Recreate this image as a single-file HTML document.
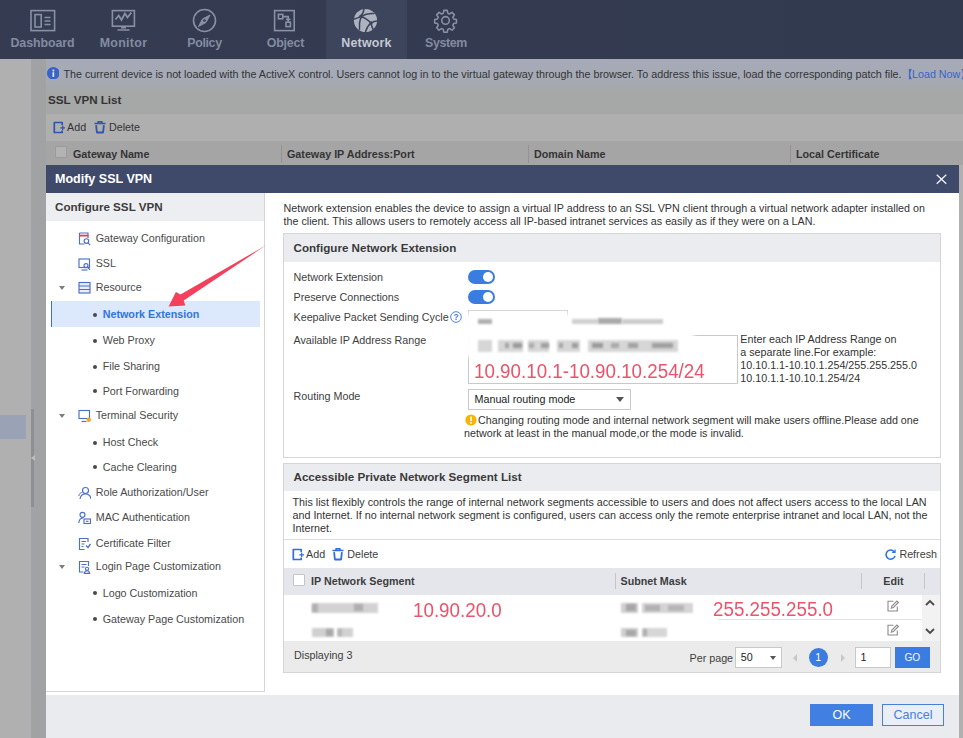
<!DOCTYPE html>
<html>
<head>
<meta charset="utf-8">
<title>Modify SSL VPN</title>
<style>
*{box-sizing:border-box;margin:0;padding:0}
html,body{width:963px;height:738px;overflow:hidden}
body{font-family:"Liberation Sans",sans-serif;font-size:10.74px;color:#3e3e3e;background:#a9a9a9;position:relative}
.abs{position:absolute}
.t{position:absolute;white-space:nowrap;line-height:14px}
.b{font-weight:bold}
#nav{left:0;top:0;width:963px;height:58.5px;background:linear-gradient(90deg,#353c52 0,#343b50 50%,#313a4e 100%)}
#nav .tab{position:absolute;top:0;height:58.5px;width:81px}
#nav .tab.on{background:#3d455d}
#nav .lbl{position:absolute;left:-20px;right:-20px;top:36px;text-align:center;font-weight:bold;font-size:12.4px;line-height:15px;color:#838ba1}
#nav .tab.on .lbl{color:#c6c9d3}
#nav svg{position:absolute;left:28px;top:8px;width:25px;height:25px;overflow:visible}
#side{left:0;top:58.5px;width:31px;height:680px;background:#b0b0b0}
#gap{left:31px;top:58.5px;width:15px;height:680px;background:#a1a2a4}
#page{left:46px;top:58.5px;width:917px;height:680px;background:#a6a7a7}
#info{left:46px;top:58.5px;width:917px;height:33px;background:linear-gradient(#a5aab6 0,#a5aab6 55%,#a6a7a8 100%)}
#tb{left:46px;top:114px;width:917px;height:27px;background:#afafaf}
#th{left:46px;top:141px;width:917px;height:24px;background:#a5a5a6}
#dlg{left:46px;top:165px;width:913px;height:573px;background:#fff}
#dh{left:0;top:0;width:913px;height:27.5px;background:#3f4a6b}
#df{left:0;top:530px;width:913px;height:43px;background:#e9ebef}
#lp{left:0;top:27.5px;width:219px;height:499px;border-right:1px solid #d6d6d6;border-bottom:1px solid #d6d6d6;background:#fff}
#lph{left:0;top:0;width:218px;height:28px;background:#eceef2}
.panel{position:absolute;border:1px solid #d6d6d6;background:#fff}
.ph{position:absolute;left:0;top:0;right:0;background:#ebecf0;font-weight:bold;font-size:11.63px;color:#3a3a3a}
.btn{position:absolute;height:22px;line-height:22px;text-align:center;font-size:12.53px}
.tog{position:absolute;width:27px;height:14px;border-radius:7px;background:#3b7ce0}
.tog:after{content:"";position:absolute;right:2.1px;top:1.8px;width:10.4px;height:10.4px;border-radius:5.2px;background:#fff}
.bl{filter:blur(1.2px)}
.red{position:absolute;white-space:nowrap;color:#eb546b;font-size:19.4px;line-height:22px;transform:scaleX(0.968);transform-origin:0 0}
</style>
</head>
<body>
<div id="nav" class="abs">
<div class="tab" style="left:2px"><svg viewBox="0 0 25 25" fill="none" stroke="#8890a6" stroke-width="1.6"><rect x="1" y="2.6" width="23.6" height="20"/><rect x="5" y="6.6" width="6.2" height="12.4"/><path d="M14.5 9.5h6M14.5 13h6M14.5 16.5h6"/></svg><div class="lbl" style="letter-spacing:-0.08px;margin-left:0px">Dashboard</div></div>
<div class="tab" style="left:83px"><svg viewBox="0 0 25 25" fill="none" stroke="#8890a6" stroke-width="1.6"><rect x="1.4" y="2.6" width="22" height="15.6"/><path d="M4.500 11.500l3.200-4 2.800 4.500 3.400-6.500 2.600 4 3.800-5" stroke-width="1.800"/><path d="M10 19.600h5M6.500 22h12"/></svg><div class="lbl" style="letter-spacing:0.3px;margin-left:0px">Monitor</div></div>
<div class="tab" style="left:164px"><svg viewBox="0 0 25 25" fill="none" stroke="#8890a6" stroke-width="1.6"><circle cx="12.5" cy="12.5" r="11"/><path d="M18 7l-4 7.500-7.500 4 4-7.500z" fill="#8890a6" stroke-width="1"/><circle cx="12.500" cy="12.500" r="1.300" fill="#353c54" stroke="none"/></svg><div class="lbl" style="letter-spacing:-0.35px;margin-left:0px">Policy</div></div>
<div class="tab" style="left:245px"><svg viewBox="0 0 25 25" fill="none" stroke="#8890a6" stroke-width="1.6"><rect x="1.600" y="2.600" width="19.600" height="20"/><rect x="5.400" y="6.400" width="4.400" height="4.400"/><rect x="13" y="14.200" width="4.400" height="4.400"/><path d="M9.800 8.600h5.400v5.600M13 11.400h4.400"/></svg><div class="lbl" style="letter-spacing:-0.2px;margin-left:0px">Object</div></div>
<div class="tab on" style="left:326px"><svg viewBox="0 0 25 25" style="left:27.200px"><circle cx="12.500" cy="12.500" r="11.600" fill="#aeb3bf"/><g fill="none" stroke="#3d455d" stroke-width="1.500" stroke-linecap="round"><path d="M8 8.500C9.500 6 10.500 4 11 1.500"/><path d="M8 8.500C5.500 9.500 3.500 10.500 1.500 11"/><path d="M8 8.500C6.500 13 6 17 6.500 21.500"/><path d="M8 8.500c3.500 1 6.500 3 10 6.500"/><path d="M8 8.500c4-2.500 8-3.500 13-3"/><path d="M18 15c2.500-1.500 4.500-2 6-2"/><path d="M18 15c-2.500 2-4.500 5-5.500 9"/><path d="M18 15c.5 2.500 1 4.500 2 6"/></g><circle cx="8" cy="8.500" r="1.900" fill="#3d455d"/><circle cx="18" cy="15" r="1.700" fill="#3d455d"/></svg><div class="lbl" style="letter-spacing:0.2px;margin-left:0px">Network</div></div>
<div class="tab" style="left:407px"><svg viewBox="0 0 25 25" fill="none" stroke="#8890a6" stroke-width="1.75"><g transform="translate(-0.700 1.150) scale(0.9)"><circle cx="12.5" cy="12.5" r="4.2"/><path d="M10.6 1.4h3.8l.6 3.1 2 .9 2.7-1.8 2.7 2.7-1.8 2.7.9 2 3.1.6v3.800l-3.1.6-.9 2 1.8 2.7-2.7 2.7-2.7-1.800-2 .9-.6 3.100h-3.800l-.6-3.100-2-.9-2.7 1.800-2.7-2.7 1.800-2.7-.9-2-3.100-.6v-3.800l3.100-.6.9-2-1.800-2.7 2.700-2.700 2.700 1.800 2-.9z" stroke-linejoin="round"/></g></svg><div class="lbl" style="letter-spacing:-0.35px;margin-left:-3px">System</div></div>
</div>
<div id="side" class="abs"><div class="abs" style="left:0;top:356.5px;width:26px;height:24px;background:#9aa2b5"></div></div>
<div id="gap" class="abs"><div class="abs" style="left:0;top:350.5px;width:3px;height:98px;background:#8f8f91"></div><div class="abs" style="left:0px;top:396.5px;width:0;height:0;border-top:3px solid transparent;border-bottom:3px solid transparent;border-right:4px solid #bdbdbd"></div></div>
<div id="page" class="abs"><div class="abs" style="left:913px;top:106.500px;width:4px;height:574px;background:#b0b0b0"></div></div>
<div id="info" class="abs">
  <svg class="abs" style="left:0.800px;top:8.300px" width="12.600" height="12.600" viewBox="0 0 12 12"><circle cx="6" cy="6" r="6" fill="#3a63c8"/><rect x="5.200" y="5" width="1.700" height="4.400" fill="#dfe4f0"/><rect x="5.200" y="2.500" width="1.700" height="1.700" fill="#dfe4f0"/></svg>
  <div class="t" style="left:17.400px;top:8.300px;color:#343434;font-size:10.755px">The current device is not loaded with the ActiveX control. Users cannot log in to the virtual gateway through the browser. To address this issue, load the corresponding patch file.</div>
  <div class="t" style="left:859px;top:8.300px;color:#3a63c8"><span style="display:inline-block;width:7px;position:relative;left:-3px">&#12304;</span>Load Now<span>&#12305;</span></div>
</div>
<div class="t b" style="left:48px;top:93px;color:#343434;font-size:11.630px">SSL VPN List</div>
<div id="tb" class="abs">
  <svg class="abs" style="left:7px;top:7px" width="13" height="13" viewBox="0 0 13 13" fill="none" stroke="#2f55b0" stroke-width="1.700" stroke-linejoin="round"><path d="M9.200 4.200V1.500H1.300v10h7.900V9.400"/><path d="M7.300 6.800h4.700M9.700 4.700v4.200" stroke-width="1.300"/></svg>
  <div class="t" style="left:21px;top:6px;color:#343434">Add</div>
  <svg class="abs" style="left:48px;top:6px" width="12" height="14" viewBox="0 0 12 14" fill="none" stroke="#2f55b0" stroke-width="1.500" stroke-linejoin="round"><path d="M.5 3.400h11M4 3.200V1.700h4v1.500"/><path d="M2.100 5.200l.8 7.300h6.200l.8-7.300" stroke-width="1.800"/></svg>
  <div class="t" style="left:63px;top:6px;color:#343434">Delete</div>
</div>
<div id="th" class="abs">
  <div class="abs" style="left:9px;top:5px;width:12px;height:12px;background:#b3b3b3;border:1px solid #9b9b9b"></div>
  <div class="t b" style="left:27px;top:6px;color:#343434">Gateway Name</div>
  <div class="abs" style="left:235px;top:4px;width:1px;height:18px;background:#939393"></div>
  <div class="t b" style="left:241px;top:6px;color:#343434">Gateway IP Address:Port</div>
  <div class="abs" style="left:482px;top:4px;width:1px;height:18px;background:#939393"></div>
  <div class="t b" style="left:488px;top:6px;color:#343434">Domain Name</div>
  <div class="abs" style="left:744px;top:4px;width:1px;height:18px;background:#939393"></div>
  <div class="t b" style="left:750px;top:6px;color:#343434">Local Certificate</div>
</div>
<div id="dlg" class="abs">
  <div id="dh" class="abs"><div class="t b" style="left:9px;top:6.900px;font-size:12.530px;color:#fff">Modify SSL VPN</div>
  <svg class="abs" style="left:890px;top:9px" width="11" height="10.500" viewBox="0 0 12 12" stroke="#f0f2f6" stroke-width="1.400" fill="none" preserveAspectRatio="none"><path d="M.8.800l10.400 10.400M11.200.800L.8 11.200"/></svg></div>
  <div id="lp" class="abs"><div id="lph" class="abs"><div class="t b" style="left:9px;top:7px;font-size:11.630px;color:#3c3c3c">Configure SSL VPN</div></div>
<svg class="abs" style="left:32px;top:39.8px" width="13" height="14" viewBox="0 0 13 14" fill="none" stroke="#4a70c8" stroke-width="1.150"><path d="M1.500 1h8.500v5M1.500 1v11h5"/><path d="M1.500 3.600h9" stroke="#e0424f" stroke-width="1.800"/><circle cx="8.400" cy="9" r="2.300"/><path d="M10 10.800l2.200 2.400"/></svg><div class="t" style="left:49.7px;top:38.5px;color:#4a4a4a;">Gateway Configuration</div>
<svg class="abs" style="left:32px;top:64.8px" width="13" height="14" viewBox="0 0 13 14" fill="none" stroke="#4a70c8" stroke-width="1.150"><rect x="1" y="2" width="10.500" height="8.500"/><path d="M3.500 13h6"/><circle cx="8" cy="8.600" r="2"/><path d="M9.500 10l2.500 2.800"/></svg><div class="t" style="left:49.7px;top:63.5px;color:#4a4a4a;">SSL</div>
<div class="abs" style="left:12.700px;top:93px;width:0;height:0;border-left:3.300px solid transparent;border-right:3.300px solid transparent;border-top:4.400px solid #7d7d7d"></div><svg class="abs" style="left:32px;top:88.8px" width="13" height="14" viewBox="0 0 13 14" fill="none" stroke="#4a70c8" stroke-width="1.150"><rect x="1" y="1.500" width="11" height="10.500" fill="#e9eefa"/><path d="M1 5h11M1 8.500h11"/></svg><div class="t" style="left:49.7px;top:87.5px;color:#4a4a4a;">Resource</div>
<div class="abs" style="left:5px;top:108.5px;width:209px;height:26px;background:#dce8fb;border-left:1px solid #3b6fd0"></div><div class="abs" style="left:47px;top:120.5px;width:4px;height:4px;border-radius:2px;background:#4a4a4a"></div><div class="t" style="left:56.7px;top:114.5px;color:#3275de;font-weight:bold;">Network Extension</div>
<div class="abs" style="left:47px;top:146.5px;width:4px;height:4px;border-radius:2px;background:#4a4a4a"></div><div class="t" style="left:56.7px;top:140.5px;color:#4a4a4a;">Web Proxy</div>
<div class="abs" style="left:47px;top:172.5px;width:4px;height:4px;border-radius:2px;background:#4a4a4a"></div><div class="t" style="left:56.7px;top:166.5px;color:#4a4a4a;">File Sharing</div>
<div class="abs" style="left:47px;top:196.5px;width:4px;height:4px;border-radius:2px;background:#4a4a4a"></div><div class="t" style="left:56.7px;top:191.5px;color:#4a4a4a;">Port Forwarding</div>
<div class="abs" style="left:12.700px;top:221px;width:0;height:0;border-left:3.300px solid transparent;border-right:3.300px solid transparent;border-top:4.400px solid #7d7d7d"></div><svg class="abs" style="left:32px;top:216.8px" width="13" height="14" viewBox="0 0 13 14" fill="none" stroke="#4a70c8" stroke-width="1.150"><rect x="1" y="1.500" width="10.500" height="8"/><path d="M3.500 12.500h5"/><circle cx="10.800" cy="10.800" r="2.200" fill="#f5a623" stroke="none"/></svg><div class="t" style="left:49.7px;top:215.5px;color:#4a4a4a;">Terminal Security</div>
<div class="abs" style="left:47px;top:248.5px;width:4px;height:4px;border-radius:2px;background:#4a4a4a"></div><div class="t" style="left:56.7px;top:242.5px;color:#4a4a4a;">Host Check</div>
<div class="abs" style="left:47px;top:272.5px;width:4px;height:4px;border-radius:2px;background:#4a4a4a"></div><div class="t" style="left:56.7px;top:267.5px;color:#4a4a4a;">Cache Clearing</div>
<svg class="abs" style="left:32px;top:293.8px" width="13" height="14" viewBox="0 0 13 14" fill="none" stroke="#4a70c8" stroke-width="1.150"><circle cx="7.500" cy="4.500" r="3"/><path d="M2 13c.5-3.500 2.500-5 5.500-5s5 1.500 5.500 5"/><path d="M.8 10c.3-2 1.500-3.200 3-3.500" stroke-width="1"/></svg><div class="t" style="left:49.7px;top:292.5px;color:#4a4a4a;">Role Authorization/User</div>
<svg class="abs" style="left:32px;top:318.8px" width="13" height="14" viewBox="0 0 13 14" fill="none" stroke="#4a70c8" stroke-width="1.150"><circle cx="4.500" cy="3.800" r="2.500"/><path d="M.8 12c.2-3 1.500-4.800 4-4.800"/><rect x="6" y="8" width="6.500" height="4.500"/><path d="M8 10.300h2.500"/></svg><div class="t" style="left:49.7px;top:317.5px;color:#4a4a4a;">MAC Authentication</div>
<svg class="abs" style="left:32px;top:344.8px" width="13" height="14" viewBox="0 0 13 14" fill="none" stroke="#4a70c8" stroke-width="1.150"><path d="M10 5V1.500H1.500v11h5"/><path d="M3.500 4.500h4.500M3.500 7h3M3.500 9.500h2"/><path d="M8 8.500l2 2 2.500-3.500" stroke-width="1.300"/></svg><div class="t" style="left:49.7px;top:343.5px;color:#4a4a4a;">Certificate Filter</div>
<div class="abs" style="left:12.700px;top:372px;width:0;height:0;border-left:3.300px solid transparent;border-right:3.300px solid transparent;border-top:4.400px solid #7d7d7d"></div><svg class="abs" style="left:32px;top:367.8px" width="13" height="14" viewBox="0 0 13 14" fill="none" stroke="#4a70c8" stroke-width="1.150"><path d="M10.500 6V1.500h-9v10.500h4"/><path d="M3.500 4.500h5M3.500 7h3"/><circle cx="9" cy="8.800" r="1.600"/><path d="M6.300 13.300c.3-1.800 1.200-2.600 2.700-2.600s2.400.8 2.700 2.600z"/></svg><div class="t" style="left:49.7px;top:366.5px;color:#4a4a4a;">Login Page Customization</div>
<div class="abs" style="left:47px;top:398.5px;width:4px;height:4px;border-radius:2px;background:#4a4a4a"></div><div class="t" style="left:56.7px;top:393.5px;color:#4a4a4a;">Logo Customization</div>
<div class="abs" style="left:47px;top:424.5px;width:4px;height:4px;border-radius:2px;background:#4a4a4a"></div><div class="t" style="left:56.7px;top:419.5px;color:#4a4a4a;">Gateway Page Customization</div>
  </div>
  <div class="t" style="left:237.5px;top:36px;color:#333">Network extension enables the device to assign a virtual IP address to an SSL VPN client through a virtual network adapter installed on</div>
  <div class="t" style="left:237.5px;top:49px;color:#333">the client. This allows users to remotely access all IP-based intranet services as easily as if they were on a LAN.</div>
  <div class="panel" id="p1" style="left:237px;top:68px;width:657.500px;height:225px">
    <div class="ph" style="height:28px"><div class="t" style="left:9.500px;top:6.800px">Configure Network Extension</div></div>
    <div class="t" style="left:9.500px;top:36px">Network Extension</div>
    <div class="tog" style="left:184px;top:36px"></div>
    <div class="t" style="left:9.500px;top:56px">Preserve Connections</div>
    <div class="tog" style="left:184px;top:56px"></div>
    <div class="t" style="left:9.500px;top:76px">Keepalive Packet Sending Cycle</div>
    <svg class="abs" style="left:166px;top:77px" width="12" height="12" viewBox="0 0 12 12"><circle cx="6" cy="6" r="5.300" fill="#fff" stroke="#4a84e0" stroke-width="1"/><text x="6" y="9.200" font-size="8.500" font-family="Liberation Sans" font-weight="bold" text-anchor="middle" fill="#4a84e0">?</text></svg>
    <div class="abs" style="left:184px;top:76px;width:100px;height:21px;border:1px solid #d4d4d4;border-bottom:none;background:#fff"></div>
    <div class="t" style="left:9.500px;top:99px">Available IP Address Range</div>
    <div class="abs" style="left:184px;top:101px;width:270px;height:49px;border:1px solid #c9c9c9;background:#fff"></div>
    <div class="abs" style="left:181px;top:80px;width:229px;height:43px;background:#fff;filter:blur(2px)"></div>
    <div class="abs bl" style="left:193.6px;top:84.5px;width:14.8px;height:5.1px;background:#b0b0b0"></div>
    <div class="abs bl" style="left:288px;top:85px;width:26px;height:4.5px;background:#d0d0d0"></div>
    <div class="abs bl" style="left:314px;top:84.3px;width:24px;height:5.7px;background:#aaaaaa"></div>
    <div class="abs bl" style="left:338px;top:85px;width:40.5px;height:4.5px;background:#cbcbcb"></div>
    <div class="abs bl" style="left:193.6px;top:105.5px;width:14.8px;height:12.3px;background:#d6d6d6"></div>
    <div class="abs bl" style="left:213.8px;top:105.5px;width:25.7px;height:12.3px;background:#d6d6d6"></div>
    <div class="abs bl" style="left:243.6px;top:105.5px;width:21.6px;height:12.3px;background:#d6d6d6"></div>
    <div class="abs bl" style="left:273.3px;top:105.5px;width:23.0px;height:12.3px;background:#d6d6d6"></div>
    <div class="abs bl" style="left:304.4px;top:105.5px;width:89.2px;height:12.3px;background:#d6d6d6"></div>
    <div class="abs bl" style="left:220.6px;top:109px;width:4.0px;height:5.4px;background:#a4a4a4"></div>
    <div class="abs bl" style="left:228.7px;top:109px;width:9.5px;height:5.4px;background:#9a9a9a"></div>
    <div class="abs bl" style="left:244.9px;top:109px;width:5.4px;height:5.4px;background:#ababab"></div>
    <div class="abs bl" style="left:257px;top:109px;width:8px;height:5.4px;background:#a0a0a0"></div>
    <div class="abs bl" style="left:274.6px;top:109px;width:4.1px;height:5.4px;background:#a6a6a6"></div>
    <div class="abs bl" style="left:288.2px;top:109px;width:5.4px;height:5.4px;background:#9c9c9c"></div>
    <div class="abs bl" style="left:308.4px;top:109px;width:10.8px;height:5.4px;background:#9a9a9a"></div>
    <div class="abs bl" style="left:327.4px;top:109px;width:8.1px;height:5.4px;background:#aaaaaa"></div>
    <div class="abs bl" style="left:343.6px;top:109px;width:10.8px;height:5.4px;background:#a2a2a2"></div>
    <div class="abs bl" style="left:367.9px;top:109px;width:21.6px;height:5.4px;background:#a0a0a0"></div>
    <div class="red" style="left:190.3px;top:125.5px">10.90.10.1-10.90.10.254/24</div>
    <div class="t" style="left:456.300px;top:98.500px;line-height:13px;white-space:normal;width:195px;color:#333">Enter each IP Address Range on<br>a separate line.For example:<br>10.10.1.1-10.10.1.254/255.255.255.0<br>10.10.1.1-10.10.1.254/24</div>
    <div class="t" style="left:9.500px;top:155px">Routing Mode</div>
    <div class="abs" style="left:184px;top:155.200px;width:163px;height:20.500px;border:1px solid #c9c9c9;background:#fff"><div class="t" style="left:5.500px;top:2px;color:#222">Manual routing mode</div><div class="abs" style="right:6px;top:7px;width:0;height:0;border-left:4px solid transparent;border-right:4px solid transparent;border-top:5px solid #555"></div></div>
    <svg class="abs" style="left:181px;top:180px" width="12" height="12" viewBox="0 0 12 12"><circle cx="6" cy="6" r="5.600" fill="#f7b500"/><rect x="5.200" y="2.500" width="1.600" height="4.500" fill="#fff"/><rect x="5.200" y="8" width="1.600" height="1.600" fill="#fff"/></svg>
    <div class="t" style="left:194px;top:179px;color:#333">Changing routing mode and internal network segment will make users offline.Please add one</div>
    <div class="t" style="left:180px;top:192px;color:#333">network at least in the manual mode,or the mode is invalid.</div>
  </div>
  <div class="panel" id="p2" style="left:237px;top:298px;width:657.500px;height:210px">
    <div class="ph" style="height:27px"><div class="t" style="left:9.500px;top:5.800px">Accessible Private Network Segment List</div></div>
    <div class="t" style="left:8.500px;top:32px;line-height:13px;white-space:normal;width:648px;color:#333">This list flexibly controls the range of internal network segments accessible to users and does not affect users access to the local LAN<br>and Internet. If no internal network segment is configured, users can access only the remote enterprise intranet and local LAN, not the<br>Internet.</div>
    <div class="abs" style="left:0;top:75.300px;width:656px;height:1px;background:#dedede"></div>
    <svg class="abs" style="left:8px;top:84px" width="13" height="13" viewBox="0 0 13 13" fill="none" stroke="#2f6fe0" stroke-width="1.700" stroke-linejoin="round"><path d="M9.200 4.200V1.500H1.300v10h7.900V9.400"/><path d="M7.300 6.800h4.700M9.700 4.700v4.200" stroke-width="1.300"/></svg>
    <div class="t" style="left:22px;top:83px">Add</div>
    <svg class="abs" style="left:48.3px;top:83px" width="12" height="14" viewBox="0 0 12 14" fill="none" stroke="#2f6fe0" stroke-width="1.500" stroke-linejoin="round"><path d="M.5 3.400h11M4 3.200V1.700h4v1.500"/><path d="M2.100 5.200l.8 7.300h6.200l.8-7.300" stroke-width="1.800"/></svg>
    <div class="t" style="left:63.300px;top:83px">Delete</div>
    <svg class="abs" style="left:601px;top:84.500px" width="11" height="11" viewBox="0 0 12 12" fill="none" stroke="#2f6fe0" stroke-width="1.700"><path d="M10.300 3.200A5 5 0 1 0 11 7.500"/><path d="M11 .5v3.200H7.800" stroke-width="1.300"/></svg>
    <div class="t" style="left:615.400px;top:83px">Refresh</div>
    <div class="abs" style="left:0;top:103.700px;width:656px;height:27.500px;background:#e4e6eb"></div>
    <div class="abs" style="left:9px;top:109.600px;width:12px;height:12px;background:#fff;border:1px solid #c4c4c4;border-radius:1px"></div>
    <div class="t b" style="left:27px;top:110px">IP Network Segment</div>
    <div class="abs" style="left:331px;top:109px;width:1px;height:16px;background:#c6c6c6"></div>
    <div class="t b" style="left:336.500px;top:110px">Subnet Mask</div>
    <div class="abs" style="left:577px;top:109px;width:1px;height:16px;background:#c6c6c6"></div>
    <div class="t b" style="left:578px;top:110px;width:63px;text-align:center">Edit</div>
    <div class="abs" style="left:640px;top:109px;width:1px;height:16px;background:#c6c6c6"></div>
    <div class="abs" style="left:434px;top:155px;width:203.700px;height:1px;background:#e4e4e4"></div>
    <div class="abs" style="left:637.700px;top:131.200px;width:18.300px;height:45.800px;background:#f2f2f2"></div>
    <div class="abs bl" style="left:28px;top:138.5px;width:65.5px;height:10.0px;background:#d2d2d2"></div>
    <div class="abs bl" style="left:28px;top:139.5px;width:6px;height:8.0px;background:#b0b0b0"></div>
    <div class="abs bl" style="left:70px;top:140px;width:9px;height:7px;background:#aeaeae"></div>
    <div class="abs bl" style="left:28px;top:163.5px;width:21.8px;height:9.5px;background:#d0d0d0"></div>
    <div class="abs bl" style="left:53px;top:163.5px;width:15.5px;height:9.5px;background:#d2d2d2"></div>
    <div class="abs bl" style="left:41.5px;top:164.5px;width:7.0px;height:7.5px;background:#a8a8a8"></div>
    <div class="abs bl" style="left:54px;top:164.5px;width:4px;height:7.5px;background:#b4b4b4"></div>
    <div class="abs bl" style="left:336.5px;top:138.5px;width:17.5px;height:10.0px;background:#cfcfcf"></div>
    <div class="abs bl" style="left:357.5px;top:138.5px;width:51.0px;height:10.0px;background:#d4d4d4"></div>
    <div class="abs bl" style="left:342px;top:140px;width:10px;height:7px;background:#a6a6a6"></div>
    <div class="abs bl" style="left:361px;top:140.5px;width:15px;height:6.0px;background:#b0b0b0"></div>
    <div class="abs bl" style="left:384px;top:140.5px;width:16px;height:6.0px;background:#b6b6b6"></div>
    <div class="abs bl" style="left:336.5px;top:164px;width:17.5px;height:9px;background:#cfcfcf"></div>
    <div class="abs bl" style="left:357.5px;top:164px;width:25.5px;height:9px;background:#d6d6d6"></div>
    <div class="abs bl" style="left:342px;top:165.5px;width:10px;height:6.0px;background:#a8a8a8"></div>
    <div class="abs bl" style="left:358.5px;top:165px;width:4.5px;height:7px;background:#adadad"></div>
    <div class="red" style="left:128.5px;top:134.7px">10.90.20.0</div>
    <div class="red" style="left:429px;top:134px">255.255.255.0</div>
    <svg class="abs" style="left:602.5px;top:135.5px" width="12" height="12" viewBox="0 0 12 12" fill="none" stroke="#8c8c8c" stroke-width="1.100"><path d="M6.500 1.300H1v9.700h9.300V6.500"/><path d="M4.300 8.200l.6-2.200 5-5 1.500 1.500-5 5z"/></svg>
    <svg class="abs" style="left:602.5px;top:159.7px" width="12" height="12" viewBox="0 0 12 12" fill="none" stroke="#8c8c8c" stroke-width="1.100"><path d="M6.500 1.300H1v9.700h9.300V6.500"/><path d="M4.300 8.200l.6-2.200 5-5 1.500 1.500-5 5z"/></svg>
    <svg class="abs" style="left:641.2px;top:134.7px" width="10" height="7" viewBox="0 0 10 7" fill="none" stroke="#4a4a4a" stroke-width="1.800"><path d="M1 6l4-4 4 4"/></svg>
    <svg class="abs" style="left:641.2px;top:163.5px" width="10" height="7" viewBox="0 0 10 7" fill="none" stroke="#4a4a4a" stroke-width="1.800"><path d="M1 1l4 4 4-4"/></svg>
    <div class="abs" style="left:0;top:177px;width:656px;height:31px;background:#ebebeb"></div>
    <div class="t" style="left:10px;top:184.300px">Displaying 3</div>
    <div class="t" style="left:405.500px;top:186.500px">Per page</div>
    <div class="abs" style="left:450.800px;top:183px;width:47px;height:21px;border:1px solid #c9c9c9;background:#fff"><div class="t" style="left:5px;top:2px;color:#222">50</div><div class="abs" style="right:5px;top:8px;width:0;height:0;border-left:3.500px solid transparent;border-right:3.500px solid transparent;border-top:4.500px solid #555"></div></div>
    <div class="abs" style="left:508.500px;top:190px;width:0;height:0;border-top:4px solid transparent;border-bottom:4px solid transparent;border-right:4px solid #c8c8c8"></div>
    <div class="abs" style="left:524.500px;top:183.500px;width:19.500px;height:19.500px;border-radius:10px;background:#3b7ce0;color:#fff;text-align:center;line-height:19.500px">1</div>
    <div class="abs" style="left:557px;top:190px;width:0;height:0;border-top:4px solid transparent;border-bottom:4px solid transparent;border-left:4px solid #c8c8c8"></div>
    <div class="abs" style="left:570.600px;top:183px;width:36px;height:21px;border:1px solid #c9c9c9;background:#fff"><div class="t" style="left:5px;top:2px;color:#222">1</div></div>
    <div class="abs" style="left:610.700px;top:183px;width:35px;height:21px;background:#3b7ce0;color:#f4f7fd;text-align:center;line-height:21px;font-size:10.200px;letter-spacing:-0.200px">GO</div>
  </div>
  <div id="df" class="abs">
    <div class="btn" style="left:764px;top:9px;width:63px;background:#417fe3;color:#fff">OK</div>
    <div class="btn" style="left:836px;top:9px;width:62px;background:#eaeef6;color:#4a7fd8;border:1px solid #4a7fd8;line-height:20px">Cancel</div>
  </div>
</div>
<svg class="abs" style="left:0;top:0;pointer-events:none" width="963" height="738" viewBox="0 0 963 738"><path d="M266.300 245.100L180.500 294.500 175.900 291.900 168.600 306.400 185.300 305.400 183.700 300.600Z" fill="#f4405a"/></svg>
</body>
</html>
